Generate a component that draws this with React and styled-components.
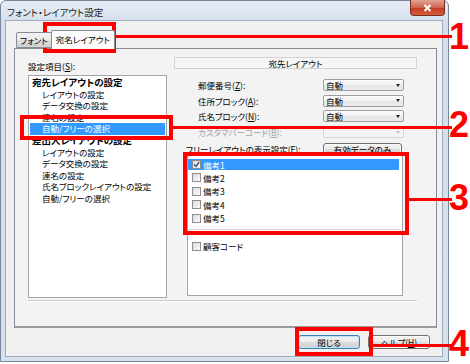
import { Fragment } from "react";
import styled, { createGlobalStyle } from "styled-components";

const GlobalStyle = createGlobalStyle`
  html, body {
    margin: 0;
    padding: 0;
    background: #fff;
  }
  body {
    font-family: "Noto Sans CJK JP", "Noto Sans", sans-serif;
    font-feature-settings: "palt";
    color: #000;
  }
`;

const Page = styled.div`
  position: relative;
  width: 470px;
  height: 364px;
  overflow: hidden;
  background: #fff;
`;

const Window = styled.div`
  width: 449px;
  height: 362px;
  box-sizing: border-box;
  border: 1px solid #76879b;
  border-radius: 6px 6px 0 0;
  background: linear-gradient(#e6edf5, #d4dfeb 22px, #d7e1ec);
  display: flex;
  flex-direction: column;
  padding: 0 5px 4px 4px;
`;

const TitleBar = styled.div`
  height: 19px;
  display: flex;
  justify-content: space-between;
  align-items: flex-start;
`;

const Title = styled.div`
  font-size: 9.5px;
  line-height: 22px;
  padding-left: 2px;
  color: #1b1b1b;
`;

const CloseButton = styled.div`
  width: 35px;
  height: 16px;
  margin: -1px -2px 0 0;
  box-sizing: border-box;
  border: 1px solid #7a2a20;
  border-top: none;
  border-radius: 0 0 4px 4px;
  background: linear-gradient(#e3a393, #d0644d 50%, #c0391f 51%, #d25f3c);
  display: flex;
  align-items: center;
  justify-content: center;
`;

const Client = styled.div`
  flex: 1;
  background: #f0f0f0;
  border: 1px solid #9eadbf;
  display: flex;
  flex-direction: column;
  padding: 9px 5px 0 8px;
`;

const TabStrip = styled.div`
  height: 18px;
  display: flex;
  align-items: flex-end;
  padding-left: 2px;
  position: relative;
  z-index: 1;
`;

const Tab = styled.div`
  box-sizing: border-box;
  height: ${(p) => (p.$active ? "19px" : "16px")};
  margin-bottom: ${(p) => (p.$active ? "-1px" : "0")};
  margin-left: ${(p) => (p.$active ? "-1px" : "0")};
  padding: 0 ${(p) => (p.$active ? "4px" : "3px")};
  border: 1px solid #898c95;
  border-bottom: ${(p) => (p.$active ? "none" : "1px solid #898c95")};
  border-radius: 2px 2px 0 0;
  background: ${(p) =>
    p.$active ? "#fbfbfb" : "linear-gradient(#f3f3f3, #ebebeb 50%, #dcdcdc 51%, #d2d2d2)"};
  font-size: 8.5px;
  line-height: ${(p) => (p.$active ? "17px" : "15px")};
  white-space: nowrap;
`;

const TabPanel = styled.div`
  height: 280px;
  box-sizing: border-box;
  border: 1px solid #898c95;
  border-bottom: 2px solid #9b9b9b;
  background: #f3f3f3;
  padding: 8px 19px 0 13px;
  display: flex;
  flex-direction: column;
`;

const PanelBody = styled.div`
  height: 241px;
  display: flex;
  gap: 7px;
`;

const LeftPane = styled.div`
  width: 139px;
  display: flex;
  flex-direction: column;
`;

const FieldLabel = styled.div`
  font-size: 8.5px;
  line-height: 12px;
  white-space: nowrap;
  color: ${(p) => (p.$disabled ? "#a3a3a3" : "#000")};
  padding-left: ${(p) => p.$indent || 0}px;
`;

const PaneLabel = styled(FieldLabel)`
  margin: 3px 0 3px;
`;

const ListBox = styled.div`
  flex: 1;
  box-sizing: border-box;
  background: #fff;
  border: 1px solid #a5a5a5;
  padding-top: 1px;
`;

const TreeItem = styled.div`
  height: 11.6px;
  line-height: 11.6px;
  margin: 0 1px;
  padding-left: ${(p) => (p.$head ? 2 : 12)}px;
  font-size: ${(p) => (p.$head ? "9.5px" : "8.5px")};
  font-weight: ${(p) => (p.$head ? 700 : 400)};
  white-space: nowrap;
  background: ${(p) => (p.$selected ? "#3399ff" : "transparent")};
  color: ${(p) => (p.$selected ? "#fff" : "#000")};
`;

const RightPane = styled.div`
  width: 243px;
  display: flex;
  flex-direction: column;
`;

const SectionHeader = styled.div`
  height: 12px;
  box-sizing: border-box;
  border: 1px solid #d2d2d2;
  background: #f6f6f6;
  font-size: 8.5px;
  line-height: 10px;
  text-align: center;
  margin-bottom: 10px;
`;

const FormGrid = styled.div`
  display: grid;
  grid-template-columns: 149px 81px;
  grid-auto-rows: 12px;
  row-gap: 3.7px;
  align-items: center;
`;

const Combo = styled.div`
  height: 12px;
  box-sizing: border-box;
  border: 1px solid ${(p) => (p.$disabled ? "#d5d5d5" : "#9d9d9d")};
  border-radius: 2px;
  background: ${(p) =>
    p.$disabled ? "#f4f4f4" : "linear-gradient(#fdfdfd, #f1f1f1 50%, #e6e6e6 51%, #ececec)"};
  display: flex;
  align-items: center;
  justify-content: space-between;
  padding: 0 3px 0 2px;
  font-size: 8.5px;
  line-height: 10px;
`;

const Arrow = styled.span`
  width: 0;
  height: 0;
  border-left: 2.5px solid transparent;
  border-right: 2.5px solid transparent;
  border-top: 3px solid ${(p) => (p.$disabled ? "#c4c4c4" : "#222")};
`;

const FreeRow = styled.div`
  margin-top: 4.5px;
  height: 12px;
  display: grid;
  grid-template-columns: 149px 79px;
  align-items: center;
`;

const PushButton = styled.div`
  box-sizing: border-box;
  height: ${(p) => p.$h || 12}px;
  width: ${(p) => p.$w || 79}px;
  border: 1px solid ${(p) => (p.$default ? "#3c7fb1" : "#707070")};
  border-radius: 3px;
  background: linear-gradient(#f2f2f2, #ebebeb 50%, #dddddd 51%, #cfcfcf);
  box-shadow: inset 0 0 0 1px ${(p) => (p.$default ? "#bfe3f8" : "#fcfcfc")};
  font-size: 8.5px;
  line-height: ${(p) => (p.$h || 12) - 2}px;
  text-align: center;
  white-space: nowrap;
`;

const CheckList = styled.div`
  margin: 0.5px 0 0 13px;
  width: 216px;
  height: 141px;
  box-sizing: border-box;
  background: #fff;
  border: 1px solid #a5a5a5;
  padding-top: 3px;
`;

const CheckGroup = styled.div`
  padding-bottom: 2.5px;
  border-bottom: 1px solid #d8d8d8;
  margin-right: 1px;
`;

const CheckRow = styled.div`
  height: 11px;
  margin: ${(p) => p.$mt || 0}px 2px 2.4px 0;
  padding-left: 3.5px;
  display: flex;
  align-items: center;
  gap: 2.5px;
  font-size: 8.5px;
  white-space: nowrap;
  background: ${(p) => (p.$selected ? "#3399ff" : "transparent")};
  color: ${(p) => (p.$selected ? "#fff" : "#000")};
`;

const Box = styled.span`
  flex: none;
  width: 9px;
  height: 9px;
  box-sizing: border-box;
  border: 1px solid #8f8f8f;
  background: linear-gradient(135deg, #dcdcdc, #fbfbfb);
  display: flex;
  align-items: center;
  justify-content: center;
`;

const Separator = styled.div`
  margin-top: 2px;
  border-top: 1px solid #c9c9c9;
  border-bottom: 1px solid #fff;
`;

const ButtonRow = styled.div`
  display: flex;
  justify-content: flex-end;
  gap: 8px;
  padding: 7px 7px 0 0;
`;

const Marker = styled.div`
  position: absolute;
  box-sizing: border-box;
  border: 4px solid #ff0000;
  left: ${(p) => p.$x}px;
  top: ${(p) => p.$y}px;
  width: ${(p) => p.$w}px;
  height: ${(p) => p.$h}px;
`;

const Leader = styled.div`
  position: absolute;
  height: 3px;
  background: #ff0000;
  left: ${(p) => p.$x}px;
  top: ${(p) => p.$y}px;
  width: ${(p) => 452 - p.$x}px;
`;

const Callout = styled.div`
  position: absolute;
  left: 448px;
  width: 22px;
  top: ${(p) => p.$y}px;
  font-family: "Liberation Sans", Arial, sans-serif;
  font-weight: 700;
  font-size: 36px;
  line-height: 36px;
  text-align: center;
  color: #ff0000;
`;

const treeItems = [
  { label: "宛先レイアウトの設定", head: true },
  { label: "レイアウトの設定" },
  { label: "データ交換の設定" },
  { label: "連名の設定" },
  { label: "自動/フリーの選択", selected: true },
  { label: "差出人レイアウトの設定", head: true },
  { label: "レイアウトの設定" },
  { label: "データ交換の設定" },
  { label: "連名の設定" },
  { label: "氏名ブロックレイアウトの設定" },
  { label: "自動/フリーの選択" },
];

const fields = [
  { label: "郵便番号", key: "Z", value: "自動" },
  { label: "住所ブロック", key: "A", value: "自動" },
  { label: "氏名ブロック", key: "N", value: "自動" },
  { label: "カスタマバーコード", key: "B", value: "", disabled: true },
];

const notes = ["備考1", "備考2", "備考3", "備考4", "備考5"];

function CheckMark() {
  return (
    <svg width="7" height="7" viewBox="0 0 7 7">
      <path d="M1 3.5 L3 5.5 L6.2 1" fill="none" stroke="#3b5488" strokeWidth="1.4" />
    </svg>
  );
}

function App() {
  return (
    <Page>
      <GlobalStyle />
      <Window>
        <TitleBar>
          <Title>フォント・レイアウト設定</Title>
          <CloseButton>
            <svg width="9" height="8" viewBox="0 0 9 8">
              <path d="M1.5 1 L7.5 7 M7.5 1 L1.5 7" stroke="#fff" strokeWidth="2" />
            </svg>
          </CloseButton>
        </TitleBar>
        <Client>
          <TabStrip>
            <Tab>フォント</Tab>
            <Tab $active>宛名レイアウト</Tab>
          </TabStrip>
          <TabPanel>
            <PanelBody>
              <LeftPane>
                <PaneLabel>
                  設定項目(<u>S</u>):
                </PaneLabel>
                <ListBox>
                  {treeItems.map((item, i) => (
                    <TreeItem key={i} $head={item.head} $selected={item.selected}>
                      {item.label}
                    </TreeItem>
                  ))}
                </ListBox>
              </LeftPane>
              <RightPane>
                <SectionHeader>宛先レイアウト</SectionHeader>
                <FormGrid>
                  {fields.map((f) => (
                    <Fragment key={f.key}>
                      <FieldLabel $indent={24} $disabled={f.disabled}>
                        {f.label}(<u>{f.key}</u>):
                      </FieldLabel>
                      <Combo $disabled={f.disabled}>
                        <span>{f.value}</span>
                        <Arrow $disabled={f.disabled} />
                      </Combo>
                    </Fragment>
                  ))}
                </FormGrid>
                <FreeRow>
                  <FieldLabel $indent={12}>
                    フリーレイアウトの表示設定(<u>F</u>):
                  </FieldLabel>
                  <PushButton>有効データのみ</PushButton>
                </FreeRow>
                <CheckList>
                  <CheckGroup>
                    {notes.map((n, i) => (
                      <CheckRow key={n} $selected={i === 0}>
                        <Box>{i === 0 && <CheckMark />}</Box>
                        {n}
                      </CheckRow>
                    ))}
                  </CheckGroup>
                  <CheckRow $mt={11}>
                    <Box />
                    顧客コード
                  </CheckRow>
                </CheckList>
              </RightPane>
            </PanelBody>
            <Separator />
          </TabPanel>
          <ButtonRow>
            <PushButton $default $w={62} $h={14}>
              閉じる
            </PushButton>
            <PushButton $w={62} $h={14}>
              ヘルプ(<u>H</u>)
            </PushButton>
          </ButtonRow>
        </Client>
      </Window>

      <Marker $x={43} $y={22} $w={73} $h={31} />
      <Leader $x={116} $y={35} />
      <Callout $y={19}>1</Callout>

      <Marker $x={20} $y={115} $w={153} $h={25} />
      <Leader $x={173} $y={126} />
      <Callout $y={107}>2</Callout>

      <Marker $x={183} $y={152} $w={226} $h={83} />
      <Leader $x={409} $y={198} />
      <Callout $y={180}>3</Callout>

      <Marker $x={295} $y={327} $w={78} $h={29} />
      <Leader $x={373} $y={344} />
      <Callout $y={326}>4</Callout>
    </Page>
  );
}

export default App;
